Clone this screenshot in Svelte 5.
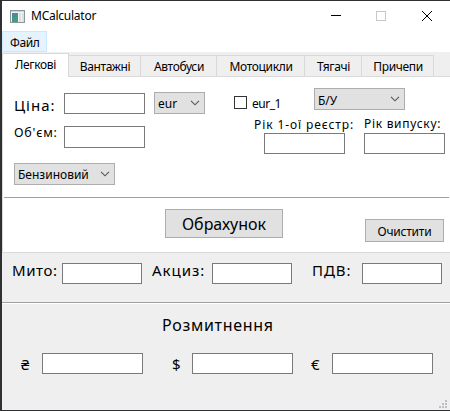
<script>
  const tabs = [
    { name: 'Легкові', w: 67 },
    { name: 'Вантажні', w: 72 },
    { name: 'Автобуси', w: 76 },
    { name: 'Мотоцикли', w: 88 },
    { name: 'Тягачі', w: 57 },
    { name: 'Причепи', w: 72 }
  ];
  let active = $state(0);
  const taxes = ['Мито:', 'Акциз:', 'ПДВ:'];
  const totals = ['₴', '$', '€'];
</script>

{#snippet combo(label, cls)}
  <button class="combo {cls}">
    <span>{label}</span>
    <svg width="10" height="6" viewBox="0 0 10 6"><path d="M1 .8 5 4.8 9 .8" fill="none" stroke="#555" stroke-width="1.1" /></svg>
  </button>
{/snippet}

<div class="desktop">
  <div class="window">
    <header>
      <svg class="app" width="15" height="13" viewBox="0 0 15 13">
        <defs><linearGradient id="g" x2="0.6" y2="1"><stop stop-color="#4f81b0" /><stop offset="1" stop-color="#3fa66c" /></linearGradient></defs>
        <rect x=".5" y=".5" width="14" height="12" fill="#f4f4f4" stroke="#8b979b" />
        <path d="M1 1.5h13" stroke="#c9d3d6" />
        <rect x="2" y="3" width="6" height="9" fill="url(#g)" />
        <path d="M9 3h2v9H9zM12 3h2v9h-2z" fill="#dcdedf" />
      </svg>
      <span class="title">MCalculator</span>
      <svg class="controls" width="104" height="12" viewBox="0 0 104 12" shape-rendering="crispEdges">
        <path d="M0 5.5h10" stroke="#000" />
        <rect x="45.5" y="1.5" width="9" height="9" fill="none" stroke="#c8c8c8" />
        <path d="M91 1 101 11M101 1 91 11" stroke="#000" shape-rendering="auto" />
      </svg>
    </header>
    <nav class="menu"><span class="file">Файл</span></nav>
    <div class="tabs">
      {#each tabs as t, i}
        <button class="tab" class:active={i === active} style="width:{t.w}px" onclick={() => (active = i)}>{t.name}</button>
      {/each}
    </div>

    <section class="pane">
      <div class="form">
        <div class="left">
          <div class="row price">
            <span class="lbl big cina">Ціна:</span><input />
            {@render combo('eur', 'eur')}
          </div>
          <div class="row volume"><span class="lbl mid obem">Об'єм:</span><input /></div>
          {@render combo('Бензиновий', 'fuel')}
        </div>
        <div class="right">
          <div class="row opts">
            <span class="check"></span><span class="checklbl">eur_1</span>
            {@render combo('Б/У', 'used')}
          </div>
          <div class="row years">
            <div class="year first"><span class="lbl small">Рік 1-ої реєстр:</span><input /></div>
            <div class="year second"><span class="lbl small">Рік випуску:</span><input /></div>
          </div>
        </div>
      </div>
      <div class="actions">
        <button class="btn calc">Обрахунок</button>
        <button class="btn clear">Очистити</button>
      </div>
    </section>

    <section class="taxes">
      {#each taxes as t, i}
        <div class="tax t{i}"><span class="lbl big">{t}</span><input /></div>
      {/each}
    </section>

    <section class="result">
      <h1>Розмитнення</h1>
      <div class="totals">
        {#each totals as t, i}
          <div class="total c{i}"><span>{t}</span><input /></div>
        {/each}
      </div>
      <svg class="grip" width="8" height="8" viewBox="0 0 8 8" fill="#bfbfbf" shape-rendering="crispEdges"><path d="M6 0h2v2H6zM3 3h2v2H3zM6 3h2v2H6zM0 6h2v2H0zM3 6h2v2H3zM6 6h2v2H6z" /></svg>
    </section>
  </div>
</div>

<style>
  * { box-sizing: border-box; }
  .desktop { width: 450px; height: 411px; padding: 1px 0 1px 2px; background: #302f32; overflow: hidden; font: 12px/16px "Noto Sans", "Open Sans", sans-serif; color: #000; }
  .window { width: 448px; height: 409px; background: #efefef; display: flex; flex-direction: column; }
  button { font: inherit; color: inherit; padding: 0; margin: 0; white-space: nowrap; }
  input { display: block; flex: none; height: 21px; width: 81px; border: 1px solid #7a7a7a; background: #fff; border-radius: 0; padding: 0; margin: 0; outline: 0; }
  header { height: 30px; background: #fff; display: flex; align-items: center; padding-left: 8px; flex: none; }
  .title { margin-left: 6px; letter-spacing: -.25px; }
  .controls { margin-left: auto; margin-right: 15px; }
  .menu { height: 21px; background: #fff; flex: none; display: flex; }
  .file { width: 45px; height: 21px; line-height: 21px; padding-left: 7px; background: #e5f3ff; border: 1px solid #cce8ff; letter-spacing: -.4px; }
  .tabs { height: 25px; flex: none; display: flex; align-items: flex-end; background: linear-gradient(#d9d9d9, #d9d9d9) 0 100% / 100% 1px no-repeat #efefef; }
  .tab { height: 22px; border: 1px solid #d9d9d9; border-left: 0; background: #efefef; line-height: 18px; padding: 2px 0 0 1px; letter-spacing: -.35px; }
  .tab.active { height: 24px; background: #fff; border-left: 1px solid #d9d9d9; border-bottom: 0; padding: 0 0 1px; }
  .pane { height: 176px; flex: none; background: #fff; border-left: 1px solid #d9d9d9; border-bottom: 1px solid #d9d9d9; }
  .form { height: 121px; margin-left: 1px; border-bottom: 1px solid #a0a0a0; display: flex; width: 445px; }
  .left { width: 230px; padding: 15px 0 0 10px; }
  .row { display: flex; }
  .lbl { white-space: nowrap; flex: none; display: block; }
  .big { font-size: 15px; line-height: 20px; }
  .mid { font-size: 12.5px; line-height: 14px; }
  .small { font-size: 12px; line-height: 14px; letter-spacing: .7px; }
  .price { height: 34px; }
  .price input { margin-top: 1px; }
  .cina { width: 50px; padding-top: 3px; letter-spacing: 1px; }
  .obem { width: 50px; letter-spacing: .8px; }
  .volume { height: 37px; }
  .volume input { height: 22px; }
  .combo { height: 22px; border: 1px solid #adadad; background: #e1e1e1; display: flex; justify-content: space-between; align-items: center; padding: 2px 4px 0 3px; flex: none; border-radius: 0; }
  .combo svg { position: relative; top: -1px; }
  .eur { width: 51px; margin-left: 9px; }
  .fuel { width: 101px; }
  .right { width: 215px; padding-top: 11px; }
  .opts { height: 30px; }
  .check { width: 13px; height: 13px; border: 1px solid #333; background: #fff; margin-top: 8px; flex: none; }
  .checklbl { margin: 8px 0 0 5px; width: 62px; letter-spacing: -.5px; }
  .combo.used { width: 91px; padding-top: 4px; }
  .used svg { top: -2px; }
  .years { height: 48px; }
  .year { height: 36px; display: flex; flex-direction: column; justify-content: space-between; }
  .first { width: 110px; margin-left: 20px; }
  .first .lbl { letter-spacing: .9px; }
  .first input { margin-left: 10px; }
  .second .lbl { margin-top: -1px; }
  .actions { height: 54px; display: flex; padding-left: 162px; align-items: flex-start; }
  .btn { border: 1px solid #adadad; background: #e1e1e1; border-radius: 0; }
  .calc { width: 118px; height: 29px; margin-top: 11px; font-size: 16px; }
  .clear { width: 79px; height: 23px; margin: 21px 0 0 82px; padding-top: 2px; line-height: 18px; letter-spacing: -.2px; }
  .taxes { height: 50px; flex: none; display: flex; padding: 10px 0 0 10px; border-bottom: 1px solid #a0a0a0; }
  .tax { display: flex; width: 140px; flex: none; }
  .tax .big { width: 50px; letter-spacing: .6px; margin-top: -3px; }
  .tax input { width: 80px; }
  .tax.t1 { width: 160px; }
  .t1 .lbl.big { width: 60px; letter-spacing: 1px; }
  .t2 .lbl.big { letter-spacing: .9px; }
  .result { flex: 1; border-top: 1px solid #fff; position: relative; }
  h1 { margin: 10px 0 0 160px; font-size: 16px; line-height: 22px; font-weight: 400; letter-spacing: .7px; }
  .totals { display: flex; padding: 17px 0 0 19px; }
  .total { display: flex; width: 150px; flex: none; font-size: 15px; line-height: 22px; }
  .total span { width: 21px; }
  .total input { width: 101px; }
  .total.c1 { width: 140px; padding-left: 1px; }
  .c1 span { width: 20px; }
  .grip { position: absolute; right: 3px; bottom: 2px; }
</style>
